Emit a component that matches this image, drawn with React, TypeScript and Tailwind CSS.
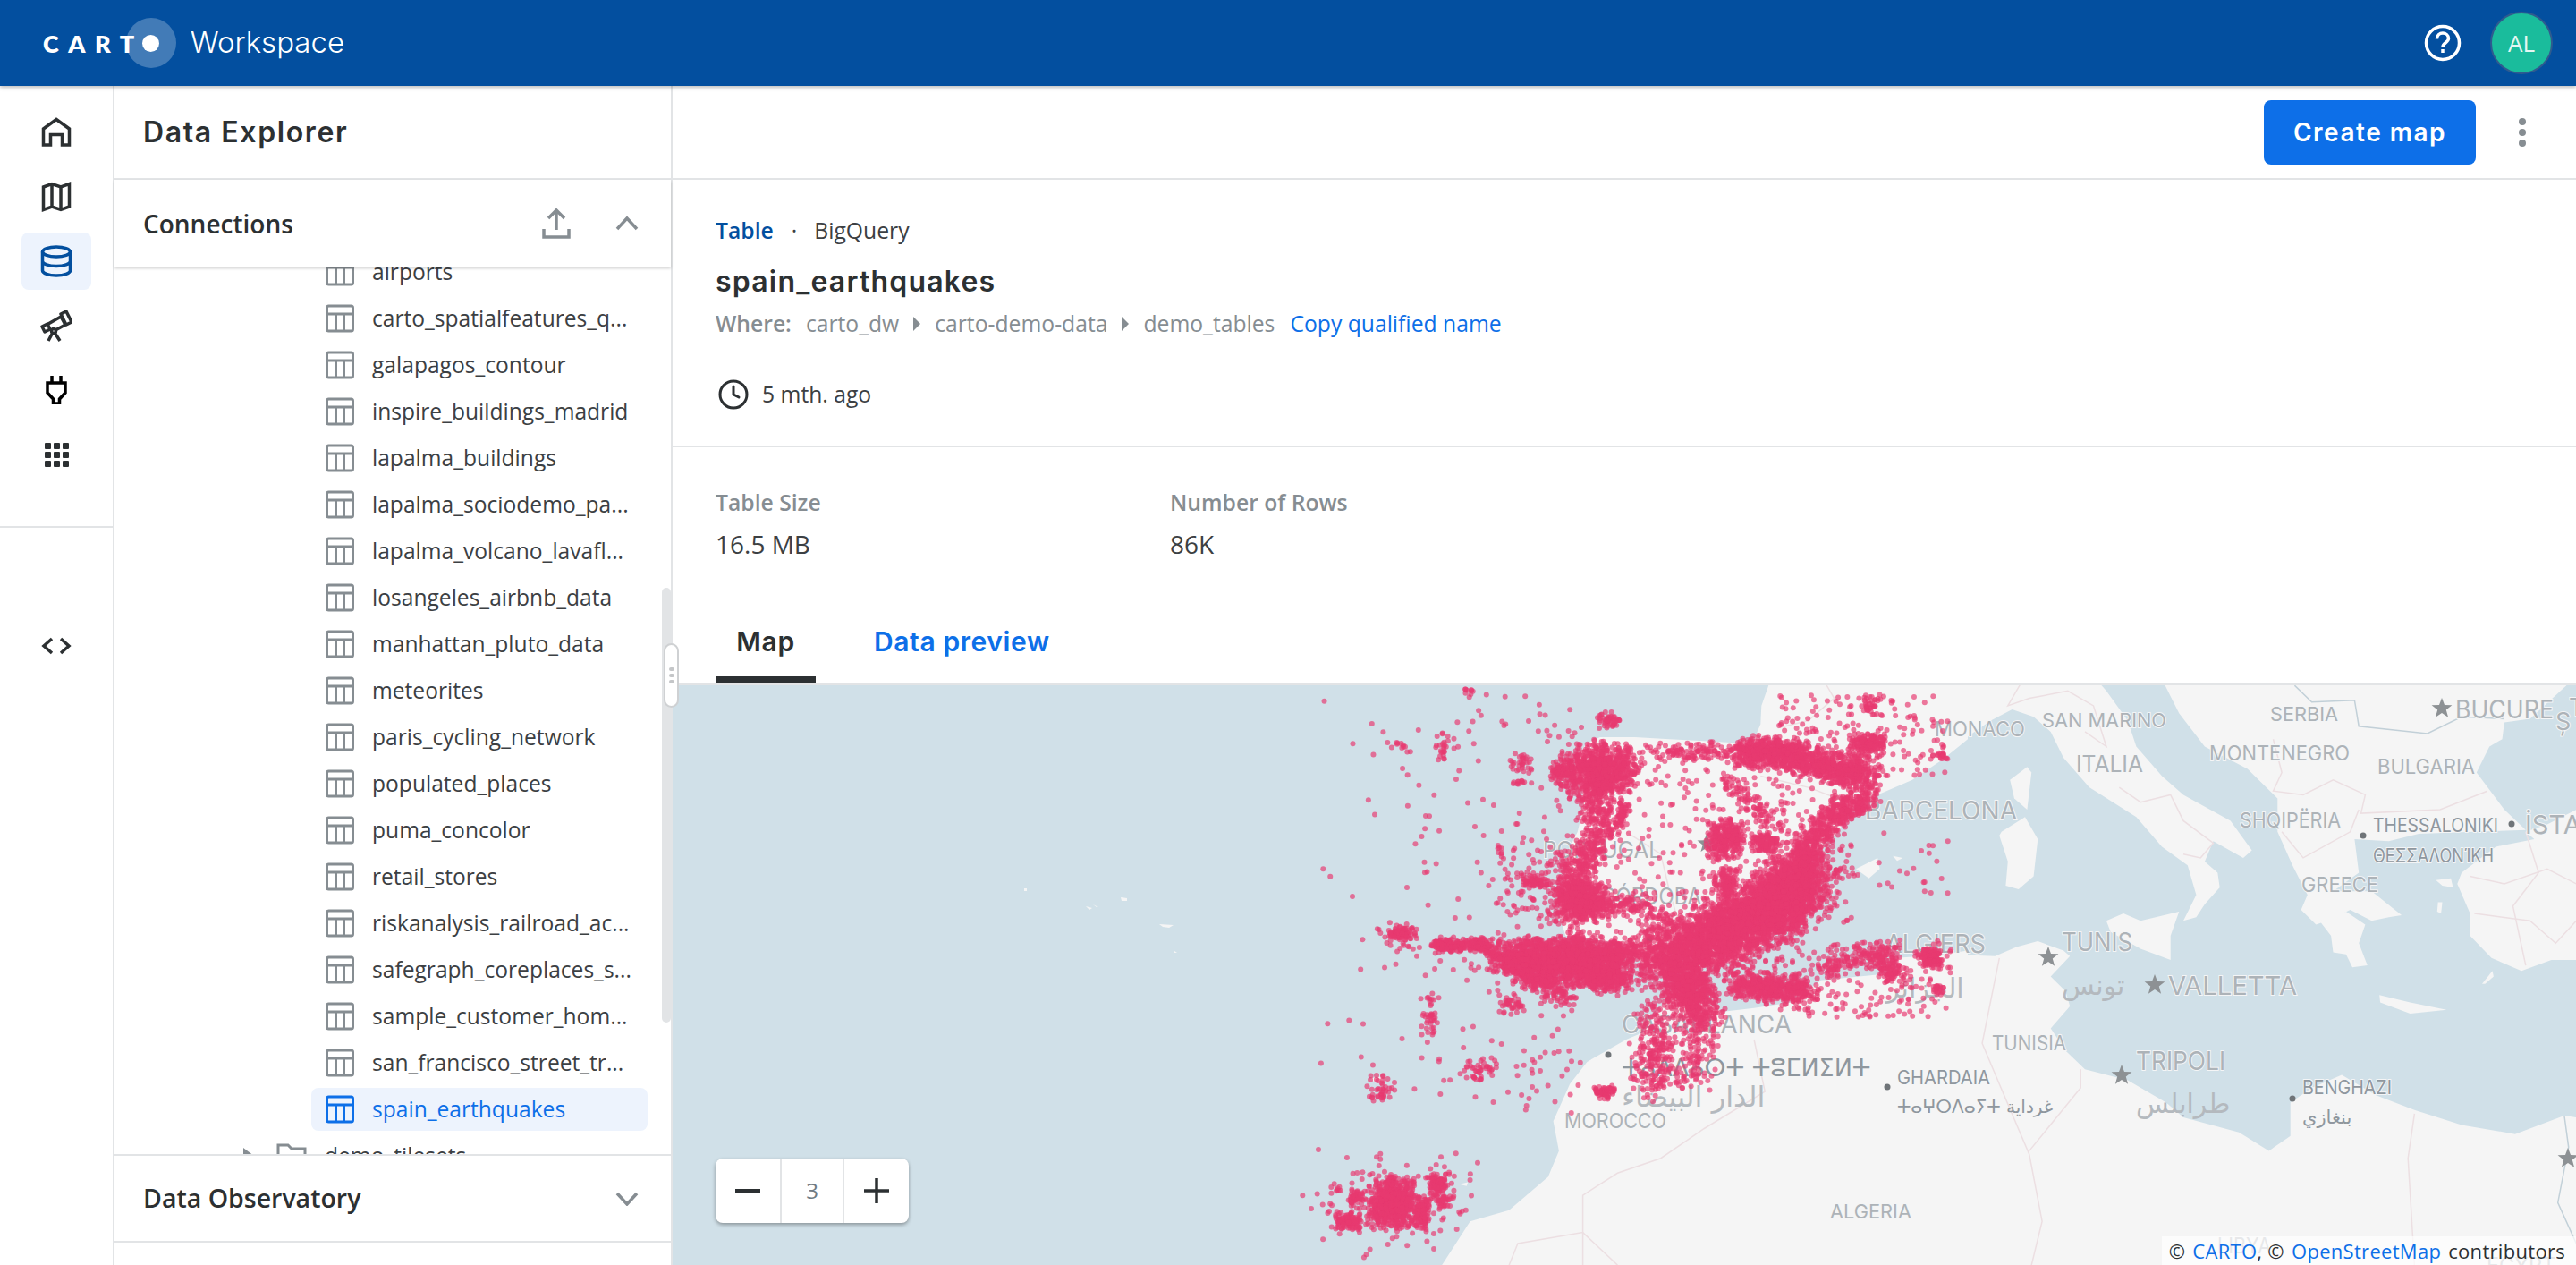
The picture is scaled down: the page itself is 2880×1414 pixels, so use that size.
import { Clock } from "lucide-react";

const tables = [
  "airports",
  "carto_spatialfeatures_q...",
  "galapagos_contour",
  "inspire_buildings_madrid",
  "lapalma_buildings",
  "lapalma_sociodemo_pa...",
  "lapalma_volcano_lavafl...",
  "losangeles_airbnb_data",
  "manhattan_pluto_data",
  "meteorites",
  "paris_cycling_network",
  "populated_places",
  "puma_concolor",
  "retail_stores",
  "riskanalysis_railroad_ac...",
  "safegraph_coreplaces_s...",
  "sample_customer_hom...",
  "san_francisco_street_tr...",
];

const heading = "font-['Inter',sans-serif]";

function TableIcon({ color = "#868d92" }: { color?: string }) {
  return (
    <svg width="32" height="32" viewBox="0 0 32 32" fill="none" stroke={color} strokeWidth="3">
      <rect x="1.5" y="2" width="29" height="28" rx="2" />
      <path d="M1.5 11h29M11.5 11v19M20.5 11v19" />
    </svg>
  );
}

function Chevron({ down = false }: { down?: boolean }) {
  return (
    <svg width="26" height="16" viewBox="0 0 26 16" fill="none" stroke="#868d92" strokeWidth="3.5">
      <path d={down ? "M2 2l11 12L24 2" : "M2 14L13 2l11 12"} />
    </svg>
  );
}

function NavIcon({ children, active = false }: { children: React.ReactNode; active?: boolean }) {
  return (
    <div className={`mx-auto flex h-16 w-[78px] items-center justify-center rounded-lg ${active ? "bg-[#edf3fd]" : ""}`}>
      {children}
    </div>
  );
}

// map helpers: the two zoomed crops of the reference each have their own scale
type P = (x: number, y: number) => [number, number];
const z8: P = (x, y) => [1440 + x * 0.4847, 764 + y * 0.4146];
const z9: P = (x, y) => [2130 + x * 0.4785, 764 + y * 0.4146];

function pts(f: P, a: number[]) {
  const out: string[] = [];
  for (let i = 0; i < a.length; i += 2) {
    const [x, y] = f(a[i], a[i + 1]);
    out.push(`${x.toFixed(1)},${y.toFixed(1)}`);
  }
  return out.join(" ");
}

const land: [P, number[]][] = [
  // iberia + france
  [z8, [1110, 0, 1092, 60, 1090, 110, 1075, 150, 1030, 160, 960, 155, 880, 150, 800, 145, 720, 145, 690, 160, 665, 200, 660, 240, 680, 290, 680, 340, 668, 400, 650, 440, 640, 510, 630, 580, 625, 620, 640, 680, 700, 690, 770, 700, 800, 730, 830, 770, 880, 785, 960, 765, 1040, 745, 1090, 710, 1125, 660, 1180, 620, 1200, 570, 1170, 510, 1215, 450, 1270, 400, 1295, 340, 1360, 300, 1440, 260, 1510, 205, 1568, 150, 1568, 0]],
  // france coast + italy
  [z9, [-30, 0, -30, 230, 30, 210, 95, 195, 150, 140, 200, 100, 250, 70, 300, 90, 340, 130, 370, 200, 430, 280, 540, 360, 600, 440, 660, 490, 680, 570, 650, 640, 680, 630, 700, 595, 735, 550, 730, 510, 700, 480, 720, 425, 790, 470, 810, 450, 760, 370, 650, 300, 600, 250, 540, 170, 520, 100, 470, 20, 455, 0]],
  // balkans
  [z9, [605, 0, 640, 80, 700, 170, 800, 230, 870, 310, 870, 400, 905, 490, 940, 570, 925, 610, 960, 650, 985, 640, 1040, 610, 1090, 640, 1130, 630, 1160, 625, 1090, 560, 1000, 560, 1060, 510, 1050, 420, 1130, 425, 1200, 405, 1330, 400, 1450, 395, 1400, 340, 1335, 240, 1365, 170, 1395, 150, 1400, 105, 1460, 95, 1550, 0]],
  // peloponnese
  [z9, [968, 640, 1030, 615, 1075, 650, 1060, 700, 1080, 760, 1045, 765, 1030, 730, 1000, 725, 995, 680]],
  // turkey
  [z9, [1568, 340, 1500, 380, 1450, 400, 1470, 420, 1380, 440, 1300, 510, 1290, 540, 1320, 620, 1320, 680, 1370, 740, 1440, 775, 1510, 745, 1568, 745]],
  // africa left
  [z8, [355, 1568, 420, 1450, 510, 1420, 600, 1330, 625, 1260, 612, 1180, 650, 1080, 690, 1020, 780, 960, 820, 940, 860, 870, 900, 810, 1000, 885, 1075, 875, 1160, 860, 1230, 800, 1400, 780, 1510, 730, 1568, 720, 1568, 1568]],
  // africa right
  [z9, [-20, 1568, -20, 740, 100, 730, 210, 735, 260, 710, 310, 695, 370, 720, 385, 735, 340, 790, 375, 830, 385, 870, 340, 930, 375, 990, 420, 1040, 520, 1070, 610, 1130, 650, 1170, 780, 1210, 850, 1260, 900, 1220, 900, 1130, 950, 1090, 1020, 1055, 1100, 1110, 1190, 1150, 1300, 1190, 1425, 1215, 1540, 1165, 1568, 1170, 1568, 1568]],
  // sicily, sardinia, corsica, crete, rhodes, lesbos
  [z9, [470, 640, 510, 620, 550, 640, 640, 615, 620, 680, 620, 745, 550, 715, 480, 670]],
  [z9, [225, 400, 280, 360, 310, 420, 300, 520, 265, 555, 235, 545, 240, 480, 220, 410]],
  [z9, [245, 260, 285, 225, 295, 240, 285, 340, 255, 310]],
  [z9, [1108, 840, 1180, 860, 1265, 880, 1180, 890, 1110, 860]],
  [z9, [1348, 810, 1372, 775, 1375, 790, 1355, 810]],
  [z9, [1240, 530, 1275, 525, 1280, 550, 1255, 545]],
  [z9, [1245, 590, 1255, 590, 1252, 620, 1243, 615]],
  // balearics
  [z8, [1310, 500, 1360, 470, 1365, 500, 1340, 525]],
  [z8, [1245, 560, 1265, 548, 1255, 565]],
  [z8, [1395, 465, 1418, 470, 1405, 478]],
  // canaries
  [z8, [190, 1065, 215, 1060, 220, 1072, 200, 1075]],
  [z8, [395, 1350, 415, 1345, 412, 1355]],
];

const borders: [P, number[]][] = [
  [z8, [680, 1568, 680, 1380, 760, 1320, 860, 1280, 960, 1200, 1100, 1100, 1075, 960]],
  [z8, [510, 1568, 530, 1510, 680, 1480, 760, 1568]],
  [z8, [1130, 120, 1200, 100, 1260, 40, 1240, 0]],
  [z8, [1090, 250, 1200, 280, 1290, 320]],
  [z8, [780, 400, 860, 460, 880, 560, 900, 640]],
  [z9, [220, 740, 180, 970, 220, 1080, 290, 1270, 320, 1450, 295, 1568]],
  [z9, [410, 1040, 410, 1090, 290, 1260]],
  [z9, [1190, 1160, 1175, 1280, 1190, 1568]],
  [z9, [500, 280, 550, 320, 620, 300, 650, 370, 720, 430, 690, 470, 650, 460]],
  [z9, [420, 130, 470, 170, 440, 60, 380, 20, 290, 40, 240, 60, 270, 0]],
  [z9, [860, 150, 880, 240, 860, 290, 930, 300, 1000, 260, 1075, 300, 1065, 350, 1250, 340, 1360, 290]],
  [z9, [880, 400, 930, 470, 1040, 400, 1060, 340]],
  [z9, [1320, 520, 1400, 540, 1500, 500, 1568, 540]],
  [z9, [1330, 620, 1460, 640, 1520, 700, 1568, 640]],
  [z9, [1450, 400, 1480, 510, 1420, 600, 1450, 760]],
];

const greyLines: [P, number[]][] = [
  [z9, [910, 5, 950, 50, 1050, 45, 1060, 115, 1220, 135, 1300, 90, 1400, 95]],
  [z9, [1540, 1165, 1550, 1250, 1525, 1400, 1568, 1510]],
];

// earthquake dots, seeded so the picture is the same on every load
function makeDots() {
  let s = 20240617;
  const rnd = () => {
    s |= 0;
    s = (s + 0x6d2b79f5) | 0;
    let t = Math.imul(s ^ (s >>> 15), 1 | s);
    t = (t + Math.imul(t ^ (t >>> 7), 61 | t)) ^ t;
    return ((t ^ (t >>> 14)) >>> 0) / 4294967296;
  };
  const gauss = () => rnd() + rnd() - 1;
  const d: [number, number][] = [];
  const band = (l: number[], w: number, n: number) => {
    const segs = l.length / 2 - 1;
    for (let i = 0; i < n; i++) {
      const k = Math.floor(rnd() * segs) * 2;
      const t = rnd();
      d.push([l[k] + (l[k + 2] - l[k]) * t + gauss() * w, l[k + 1] + (l[k + 3] - l[k + 1]) * t + gauss() * w]);
    }
  };
  const blob = (cx: number, cy: number, rx: number, ry: number, n: number) => {
    for (let i = 0; i < n; i++) d.push([cx + gauss() * rx, cy + gauss() * ry]);
  };
  const area = (x0: number, y0: number, x1: number, y1: number, n: number) => {
    for (let i = 0; i < n; i++) d.push([x0 + rnd() * (x1 - x0), y0 + rnd() * (y1 - y0)]);
  };
  // thins out towards the left edge, so the cloud has no straight side
  const fade = (x0: number, y0: number, x1: number, y1: number, n: number) => {
    for (let i = 0; i < n; i++) d.push([x0 + Math.sqrt(rnd()) * (x1 - x0), y0 + rnd() * (y1 - y0)]);
  };

  // pyrenees
  band([1050, 185, 1140, 190, 1250, 225, 1345, 250], 50, 1100);
  band([1300, 180, 1350, 160], 35, 60);
  // galicia
  blob(720, 235, 100, 85, 800);
  blob(630, 240, 30, 40, 80);
  blob(740, 100, 30, 25, 50);
  // portuguese coast
  band([700, 300, 720, 400, 670, 500, 640, 600], 50, 500);
  band([770, 330, 770, 380], 20, 60);
  // gulf of cadiz
  band([520, 745, 620, 750, 780, 745], 70, 1800);
  band([650, 680, 700, 790, 760, 800], 50, 400);
  band([560, 790, 650, 850], 40, 150);
  blob(680, 590, 70, 60, 450);
  band([720, 590, 860, 620], 35, 120);
  band([340, 705, 460, 705], 22, 240);
  band([460, 715, 520, 770], 25, 80);
  blob(265, 675, 35, 20, 60);
  // betics
  band([830, 750, 950, 700, 1050, 640, 1150, 570, 1190, 510], 100, 3000);
  band([960, 720, 1090, 640, 1170, 580], 90, 1000);
  band([900, 770, 950, 890], 65, 700);
  band([1000, 620, 1200, 620], 35, 80);
  // algeria
  band([1030, 810, 1200, 830], 45, 500);
  band([1230, 770, 1370, 720, 1400, 800], 35, 230);
  blob(1480, 740, 30, 30, 120);
  blob(1500, 825, 14, 20, 20);
  area(1100, 690, 1530, 900, 220);
  // morocco
  band([850, 870, 840, 1090], 60, 220);
  band([960, 900, 930, 1070], 45, 90);
  blob(730, 1102, 28, 20, 60);
  area(790, 950, 1000, 1100, 70);
  // east coast
  band([1340, 300, 1260, 350, 1200, 440, 1170, 520], 45, 650);
  // interior
  area(690, 160, 1300, 700, 420);
  blob(1010, 420, 50, 60, 280);
  blob(1010, 540, 30, 50, 120);
  blob(1100, 430, 40, 30, 120);
  band([1010, 260, 1070, 320, 1120, 380], 30, 90);
  band([830, 190, 1040, 180], 30, 110);
  // atlantic
  fade(30, 20, 680, 1160, 240);
  area(480, 440, 690, 640, 120);
  blob(570, 535, 40, 20, 60);
  blob(515, 860, 35, 35, 40);
  blob(440, 1040, 45, 40, 40);
  blob(215, 1090, 35, 50, 40);
  blob(330, 900, 30, 70, 40);
  blob(260, 680, 60, 40, 40);
  blob(540, 215, 30, 30, 30);
  blob(360, 170, 30, 40, 25);
  blob(255, 165, 30, 20, 12);
  blob(535, 265, 30, 10, 10);
  blob(415, 28, 20, 15, 8);
  // france
  area(1130, 30, 1530, 250, 180);
  blob(1340, 160, 45, 30, 110);
  blob(1340, 55, 25, 30, 30);
  blob(1510, 195, 10, 10, 12);
  area(1200, 400, 1530, 570, 45);
  // canaries
  blob(240, 1400, 60, 75, 600);
  blob(140, 1450, 32, 28, 110);
  blob(155, 1385, 22, 22, 50);
  blob(345, 1350, 30, 40, 100);
  blob(310, 1430, 20, 45, 110);
  blob(360, 1395, 25, 22, 30);
  blob(240, 1400, 215, 150, 170);
  return d.map(([x, y]) => z8(x, y));
}

const dots = makeDots();

type Label = { t: string; x: number; y: number; s: number; w?: number; c?: string };
const dark = "#8f979e";
const labels: Label[] = [
  { t: "MONACO", x: 2163, y: 815, s: 23, w: 101 },
  { t: "SAN MARINO", x: 2283, y: 805, s: 22, w: 139 },
  { t: "SERBIA", x: 2538, y: 798, s: 22, w: 76 },
  { t: "BUCURE", x: 2745, y: 792, s: 29, w: 110 },
  { t: "Ș", x: 2857, y: 806, s: 27 },
  { t: "T", x: 2872, y: 790, s: 27 },
  { t: "ITALIA", x: 2321, y: 854, s: 25, w: 75 },
  { t: "MONTENEGRO", x: 2470, y: 842, s: 23, w: 157 },
  { t: "BULGARIA", x: 2658, y: 857, s: 23, w: 109 },
  { t: "BARCELONA", x: 2085, y: 906, s: 28, w: 170 },
  { t: "SHQIPËRIA", x: 2504, y: 917, s: 23, w: 113 },
  { t: "THESSALONIKI", x: 2653, y: 922, s: 21, w: 140, c: dark },
  { t: "ΘΕΣΣΑΛΟΝΊΚΗ", x: 2653, y: 956, s: 21, w: 135, c: dark },
  { t: "İSTA", x: 2823, y: 921, s: 29 },
  { t: "GREECE", x: 2573, y: 989, s: 23, w: 86 },
  { t: "PORTUGAL", x: 1725, y: 950, s: 25, w: 132 },
  { t: "CÓRDOBA", x: 1790, y: 1002, s: 25, w: 112 },
  { t: "CASABLANCA", x: 1813, y: 1144, s: 29, w: 190 },
  { t: "MOROCCO", x: 1749, y: 1253, s: 23, w: 114 },
  { t: "GHARDAIA", x: 2121, y: 1204, s: 21, w: 104, c: dark },
  { t: "ALGERIA", x: 2046, y: 1354, s: 22, w: 91 },
  { t: "ALGIERS", x: 2108, y: 1054, s: 29, w: 112 },
  { t: "TUNIS", x: 2305, y: 1053, s: 28, w: 79 },
  { t: "VALLETTA", x: 2424, y: 1101, s: 29, w: 144 },
  { t: "TUNISIA", x: 2227, y: 1166, s: 23, w: 83 },
  { t: "TRIPOLI", x: 2388, y: 1185, s: 29, w: 100 },
  { t: "BENGHAZI", x: 2574, y: 1215, s: 21, w: 100, c: dark },
  { t: "LIBYA", x: 2479, y: 1392, s: 24, w: 60 },
  { t: "EGYPT", x: 2780, y: 1414, s: 24, w: 77 },
];
const scripts: Label[] = [
  { t: "ⵜⴰⴷⴷⴰⵔⵜ ⵜⵓⵎⵍⵉⵍⵜ", x: 1813, y: 1193, s: 27, c: dark },
  { t: "الدار البيضاء", x: 1813, y: 1226, s: 32 },
  { t: "ⵜⴰⵖⵔⴷⴰⵢⵜ غرداية", x: 2121, y: 1237, s: 20, c: dark },
  { t: "الجزائر", x: 2109, y: 1104, s: 30 },
  { t: "تونس", x: 2305, y: 1101, s: 30 },
  { t: "طرابلس", x: 2388, y: 1233, s: 30 },
  { t: "بنغازي", x: 2574, y: 1249, s: 21, c: dark },
];

const stars = [
  [1908, 943, 11], [2290, 1070, 12], [2409, 1101, 12], [2372, 1202, 12], [2730, 792, 12], [2871, 1295, 12],
];
const places = [
  [1798, 1179], [2110, 1215], [2642, 934], [2808, 921], [2563, 1228], [1844, 1050],
];

function starPath(cx: number, cy: number, r: number) {
  const p: string[] = [];
  for (let i = 0; i < 10; i++) {
    const a = -Math.PI / 2 + (i * Math.PI) / 5;
    const q = i % 2 ? r * 0.42 : r;
    p.push(`${(cx + Math.cos(a) * q).toFixed(1)},${(cy + Math.sin(a) * q).toFixed(1)}`);
  }
  return p.join(" ");
}

function MapCanvas() {
  return (
    <svg className="block h-full w-full" viewBox="752 766 2128 648" preserveAspectRatio="none">
      <rect x="752" y="766" width="2128" height="648" fill="#d0e0e8" />
      {land.map(([f, a], i) => (
        <polygon key={i} points={pts(f, a)} fill="#f5f5f5" />
      ))}
      {/* small atlantic islands */}
      <path d="M1145 993l3 0 0 3-3 0zM1214 1013l7 2-3 2zM1222 1011l6 3-2 0zM1253 1003l7 1 0 3-6 0zM1296 1033l16 1-5 3-7-1zM1313 1063l3 2-4 0z" fill="#f5f5f5" />
      {borders.map(([f, a], i) => (
        <polyline key={i} points={pts(f, a)} fill="none" stroke="#ecdfe2" strokeWidth="1.5" />
      ))}
      {greyLines.map(([f, a], i) => (
        <polyline key={i} points={pts(f, a)} fill="none" stroke="#c2d0d8" strokeWidth="1.5" />
      ))}
      {labels.map((l) => (
        <text
          key={l.t}
          x={l.x}
          y={l.y}
          fontFamily="Inter, sans-serif"
          fontSize={l.s}
          fill={l.c ?? "#adb3b8"}
          stroke="#f4f5f6"
          strokeWidth="2"
          paintOrder="stroke"
          dominantBaseline="central"
          textLength={l.w}
          lengthAdjust="spacingAndGlyphs"
        >
          {l.t}
        </text>
      ))}
      {scripts.map((l) => (
        <text
          key={l.t}
          x={l.x}
          y={l.y}
          fontFamily="'DejaVu Sans', sans-serif"
          fontSize={l.s}
          fill={l.c ?? "#b4b9be"}
          dominantBaseline="central"
          direction="ltr"
        >
          {l.t}
        </text>
      ))}
      {stars.map(([x, y, r], i) => (
        <polygon key={i} points={starPath(x, y, r)} fill="#8d9194" />
      ))}
      {places.map(([x, y], i) => (
        <circle key={i} cx={x} cy={y} r="3.5" fill="#6f7478" />
      ))}
      {dots.map(([x, y], i) => (
        <circle key={i} cx={x} cy={y} r="3" fill="#e83a70" fillOpacity="0.68" />
      ))}
    </svg>
  );
}

export default function App() {
  return (
    <div className="flex h-[1414px] w-[2880px] flex-col overflow-hidden bg-white font-['Open_Sans',sans-serif] text-[#2c3032]">
      {/* Top bar */}
      <header className="relative z-30 flex h-24 shrink-0 items-center bg-[#034f9f] pl-12 pr-[26px] text-white shadow-[0_2px_4px_rgba(0,0,0,0.25)]">
        <div className="relative flex items-center">
          <span className="font-['Lato',sans-serif] text-[27px] font-extrabold leading-none tracking-[10.5px]">CART</span>
          <div className="-ml-[20px] flex h-14 w-14 items-center justify-center rounded-full bg-white/25">
            <div className="h-[19px] w-[19px] rounded-full bg-white" />
          </div>
        </div>
        <span className={`ml-[16px] text-[33px] font-light ${heading}`}>Workspace</span>
        <div className="ml-auto flex items-center gap-[32px]">
          <svg width="42" height="42" viewBox="0 0 42 42" fill="none" stroke="white" strokeWidth="3.5">
            <circle cx="21" cy="21" r="18.5" />
            <path d="M14.5 16.5c0-4 3-6.500 6.500-6.500s6.500 2.500 6.500 6c0 4.500-6.500 5-6.500 9.500" />
            <path d="M21 28v4" />
          </svg>
          <div className="flex h-[70px] w-[70px] items-center justify-center rounded-full border-2 border-[#2f5b8f] bg-[#1abc9c] text-[26px] text-[#e4f7f3]">
            AL
          </div>
        </div>
      </header>

      <div className="relative flex min-h-0 flex-1">
        {/* Icon rail */}
        <nav className="flex w-[128px] shrink-0 flex-col border-r-2 border-[#e2e4e6] pt-5">
          <div className="flex flex-col gap-2">
            <NavIcon>
              <svg width="34" height="34" viewBox="0 0 34 34" fill="none" stroke="#2c3032" strokeWidth="3.5">
                <path d="M2.500 31V13L17 2.500 31.500 13v18h-8V19.500h-13V31z" />
              </svg>
            </NavIcon>
            <NavIcon>
              <svg width="34" height="34" viewBox="0 0 34 34" fill="none" stroke="#2c3032" strokeWidth="3.5">
                <path d="M2.500 6L12 2.500 22 6l9.500-3.500V28L22 31.500 12 28l-9.500 3.500zM12 2.500V28M22 6v25.500" />
              </svg>
            </NavIcon>
            <NavIcon active>
              <svg width="36" height="36" viewBox="0 0 36 36" fill="none" stroke="#034f9f" strokeWidth="3.5">
                <ellipse cx="18" cy="7.500" rx="15.500" ry="5.500" />
                <path d="M2.500 7.500v21c0 3 7 5.500 15.500 5.500s15.500-2.500 15.500-5.500v-21M2.500 18c0 3 7 5.500 15.500 5.500s15.500-2.500 15.500-5.500" />
              </svg>
            </NavIcon>
            <NavIcon>
              <svg width="36" height="36" viewBox="0 0 36 36" fill="none" stroke="#2c3032" strokeWidth="3.5" strokeLinejoin="round">
                <path d="M9 16l14-8 5 9-11 6" />
                <path d="M23 5l6-3 6 12-6 3z" />
                <path d="M2 19l6-3 3 6-6 3z" />
                <circle cx="15" cy="24" r="2.500" />
                <path d="M13.500 26.500L9 35M16.500 26.500L22 35" />
              </svg>
            </NavIcon>
            <NavIcon>
              <svg width="24" height="32" viewBox="0 0 24 32" fill="none" stroke="#000" strokeWidth="3.500">
                <path d="M7 0v8M17 0v8M2 8h20v11l-6.500 7v5h-7v-5L2 19z" />
              </svg>
            </NavIcon>
            <NavIcon>
              <div className="grid grid-cols-3 gap-[3px]">
                {[0, 1, 2, 3, 4, 5, 6, 7, 8].map((i) => (
                  <div key={i} className="h-[7px] w-[7px] rounded-[1px] bg-[#2c3032]" />
                ))}
              </div>
            </NavIcon>
          </div>
          <div className="mt-[48px] h-0.5 w-full bg-[#e2e4e6]" />
          <div className="mt-[122px] flex justify-center">
            <svg width="34" height="20" viewBox="0 0 34 20" fill="none" stroke="#2c3032" strokeWidth="3.5">
              <path d="M12 2L3 10l9 8M22 2l9 8-9 8" />
            </svg>
          </div>
        </nav>

        {/* Data explorer */}
        <aside className="flex w-[624px] shrink-0 flex-col border-r-2 border-[#e2e4e6]">
          <div className="flex h-[105px] shrink-0 items-center border-b-2 border-[#e2e4e6] pl-8">
            <h1 className={`text-[32px] font-semibold tracking-[1.6px] ${heading}`}>Data Explorer</h1>
          </div>
          <div className="relative z-10 flex h-[97px] shrink-0 items-center pl-8 pr-9 shadow-[0_2px_3px_rgba(0,0,0,0.2)]">
            <span className="text-[28px] font-semibold">Connections</span>
            <svg className="ml-auto mr-[50px]" width="32" height="34" viewBox="0 0 32 34" fill="none" stroke="#868d92" strokeWidth="3.5">
              <path d="M16 24V3M7 11l9-9 9 9M2 23v9h28v-9" />
            </svg>
            <Chevron />
          </div>
          <div className="relative min-h-0 flex-1 overflow-hidden">
            <div className="-mt-[18px] ml-[220px] flex w-[376px] flex-col gap-1">
              {tables.map((t) => (
                <div key={t} className="flex h-12 shrink-0 items-center gap-[20px] pl-4 text-[24.6px] text-[#3c4043]">
                  <TableIcon />
                  <span className="whitespace-nowrap">{t}</span>
                </div>
              ))}
              <div className="flex h-12 shrink-0 items-center gap-[20px] rounded-lg bg-[#edf3fd] pl-4 text-[24.6px] text-[#0d6fe8]">
                <TableIcon color="#0d6fe8" />
                <span>spain_earthquakes</span>
              </div>
              <div className="-ml-[77px] flex h-12 shrink-0 items-center text-[24.6px] text-[#3c4043]">
                <svg width="14" height="20" viewBox="0 0 14 20" fill="#868d92">
                  <path d="M1 1l12 9-12 9z" />
                </svg>
                <svg className="ml-[24px]" width="34" height="30" viewBox="0 0 34 30" fill="none" stroke="#868d92" strokeWidth="3">
                  <path d="M2 3h11l4 4h15v21H2z" />
                </svg>
                <span className="ml-[20px]">demo_tilesets</span>
              </div>
            </div>
            <div className="absolute left-[612px] top-[359px] h-[486px] w-2.5 rounded-full bg-[#e2e4e6]" />
          </div>
          <div className="flex h-[99px] shrink-0 items-center border-y-2 border-[#e2e4e6] pl-8 pr-9">
            <span className="text-[28.500px] font-semibold">Data Observatory</span>
            <span className="ml-auto">
              <Chevron down />
            </span>
          </div>
          <div className="h-[25px] shrink-0" />
        </aside>

        {/* Table details */}
        <main className="flex min-w-0 flex-1 flex-col">
          <div className="flex h-[105px] shrink-0 items-center justify-end border-b-2 border-[#e2e4e6] pr-[56px]">
            <button className={`h-[72px] w-[237px] rounded-lg bg-[#0d6fe8] text-[28px] font-semibold tracking-[1.5px] text-white ${heading}`}>
              Create map
            </button>
            <div className="ml-12 flex flex-col gap-1">
              <div className="h-2 w-2 rounded-full bg-[#868d92]" />
              <div className="h-2 w-2 rounded-full bg-[#868d92]" />
              <div className="h-2 w-2 rounded-full bg-[#868d92]" />
            </div>
          </div>

          <section className="h-[299px] shrink-0 border-b-2 border-[#e2e4e6] px-12 pt-[39px]">
            <div className="flex h-9 items-center text-[24.7px]">
              <span className="font-semibold text-[#034f9f]">Table</span>
              <span className="ml-[20px] text-[#3c4043]">·</span>
              <span className="ml-[19px] text-[#3c4043]">BigQuery</span>
            </div>
            <h2 className={`mt-[18px] text-[32px] font-semibold leading-[42px] tracking-[1.2px] ${heading}`}>spain_earthquakes</h2>
            <div className="mt-[8px] flex h-9 items-center text-[24.7px] text-[#868d92]">
              <span className="font-semibold">Where:</span>
              <span className="ml-4">carto_dw</span>
              <svg className="mx-[15px]" width="10" height="18" viewBox="0 0 10 18" fill="#868d92"><path d="M1 1l8 8-8 8z" /></svg>
              <span>carto-demo-data</span>
              <svg className="mx-[15px]" width="10" height="18" viewBox="0 0 10 18" fill="#868d92"><path d="M1 1l8 8-8 8z" /></svg>
              <span>demo_tables</span>
              <span className="ml-[17px] text-[#0d6fe8]">Copy qualified name</span>
            </div>
            <div className="mt-[42px] flex items-center text-[24.7px] text-[#3c4043]">
              <Clock className="ml-[2px] h-9 w-9 text-[#2c3032]" strokeWidth={2} />
              <span className="ml-[14px]">5 mth. ago</span>
            </div>
          </section>

          <section className="flex shrink-0 px-12 pt-[44px]">
            <div className="w-[508px]">
              <div className="h-9 text-[24.7px] font-semibold leading-9 text-[#868d92]">Table Size</div>
              <div className="mt-[10px] h-9 text-[28px] leading-9 text-[#3c4043]">16.5 MB</div>
            </div>
            <div>
              <div className="h-9 text-[24.7px] font-semibold leading-9 text-[#868d92]">Number of Rows</div>
              <div className="mt-[10px] h-9 text-[28px] leading-9 text-[#3c4043]">86K</div>
            </div>
          </section>

          <div className={`mt-[48px] flex h-[92px] shrink-0 border-b-2 border-[#e2e4e6] px-12 text-[30px] font-semibold tracking-[0.6px] ${heading}`}>
            <div className="flex w-[112px] items-center justify-center border-b-8 border-[#2c3032] pt-1">Map</div>
            <div className="ml-[65px] flex items-center pb-1 text-[#0d6fe8]">Data preview</div>
          </div>

          <div className="relative min-h-0 flex-1 overflow-hidden">
            <MapCanvas />
            <div className="absolute bottom-[47px] left-12 flex h-[72px] w-[216px] rounded-lg bg-white text-[#2c3032] shadow-[0_2px_4px_rgba(0,0,0,0.35)]">
              <div className="flex w-[72px] items-center justify-center">
                <div className="h-[3.5px] w-7 bg-[#2c3032]" />
              </div>
              <div className="flex w-[72px] items-center justify-center border-x-2 border-[#e2e4e6] text-[24px] text-[#6f7b83]">3</div>
              <svg className="m-auto" width="30" height="30" viewBox="0 0 30 30" fill="none" stroke="#2c3032" strokeWidth="3.5">
                <path d="M15 1v28M1 15h28" />
              </svg>
            </div>
            <div className="absolute bottom-0 right-0 flex h-8 w-[463px] items-center justify-end whitespace-nowrap bg-white/70 pr-3 text-[22px] tracking-[0.3px] text-[#2c3032]">
              © <span className="ml-2 text-[#0d6fe8]">CARTO</span>, © <span className="ml-2 text-[#0d6fe8]">OpenStreetMap</span>
              <span className="ml-2">contributors</span>
            </div>
          </div>
        </main>

        {/* Resize handle between panel and main */}
        <div className="absolute left-[742px] top-[623px] z-20 flex h-[72px] w-[17px] flex-col items-center justify-center gap-[3px] rounded-full border-2 border-[#cfd1d3] bg-white">
          <div className="h-1 w-1.5 rounded-full bg-[#c4c6c8]" />
          <div className="h-1 w-1.5 rounded-full bg-[#c4c6c8]" />
          <div className="h-1 w-1.5 rounded-full bg-[#c4c6c8]" />
        </div>
      </div>
    </div>
  );
}
